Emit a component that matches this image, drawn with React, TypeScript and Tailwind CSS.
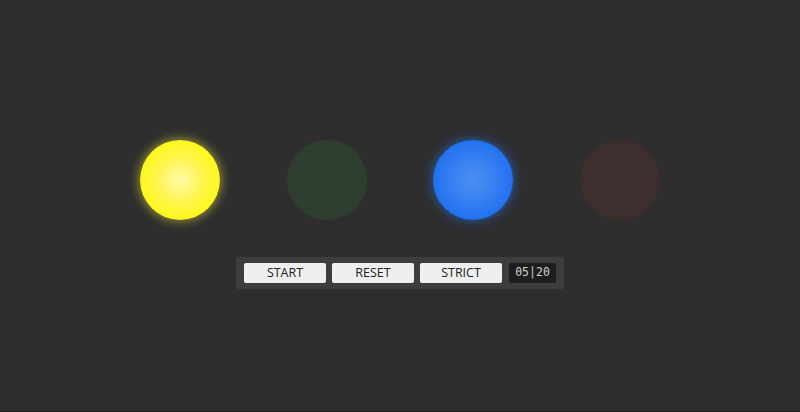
const lights = [
  {
    id: "yellow",
    className:
      "bg-[radial-gradient(circle_at_center,#fffaa8_0%,#fff55a_35%,#fff71a_70%,#fff714_100%)] shadow-[0_0_10px_2px_rgba(255,247,60,0.45)]",
  },
  {
    id: "green",
    className:
      "bg-[radial-gradient(circle_at_center,#303f31_0%,#2e3e30_60%,#2c3d2e_100%)]",
  },
  {
    id: "blue",
    className:
      "bg-[radial-gradient(circle_at_center,#4b8ff3_0%,#3a82f2_35%,#1e6ff0_75%,#1a6cf0_100%)] shadow-[0_0_10px_2px_rgba(40,120,255,0.45)]",
  },
  {
    id: "red",
    className:
      "bg-[radial-gradient(circle_at_center,#3f302f_0%,#3e2e2d_60%,#3e2c2c_100%)]",
  },
];

function PanelButton({ label }: { label: string }) {
  return (
    <button className="w-[82px] h-5 rounded-[2px] bg-[#efefef] text-[12.5px] leading-5 text-[#222] font-['Open_Sans',sans-serif]">
      {label}
    </button>
  );
}

export default function App() {
  return (
    <div className="w-[800px] h-[412px] bg-[#1c1c1c] overflow-hidden">
      <div className="h-[411px] bg-[#2e2e2e] flex flex-col items-center pt-[140px]">
        {/* Lights */}
        <div className="flex gap-[66.7px]">
          {lights.map((l) => (
            <div key={l.id} className={`w-20 h-20 rounded-full ${l.className}`} />
          ))}
        </div>

        {/* Controls */}
        <div className="mt-[37px] flex items-center gap-[6px] bg-[#3d3d3d] rounded-[2px] pl-2 pr-2 py-[6px]">
          <PanelButton label="START" />
          <PanelButton label="RESET" />
          <PanelButton label="STRICT" />
          <div className="ml-px w-[47px] h-5 rounded-[2px] bg-[#1e1e1e] flex items-center justify-center text-[11.5px] text-[#d0d0d0] font-['DejaVu_Sans_Mono',monospace]">
            05|20
          </div>
        </div>
      </div>
    </div>
  );
}
